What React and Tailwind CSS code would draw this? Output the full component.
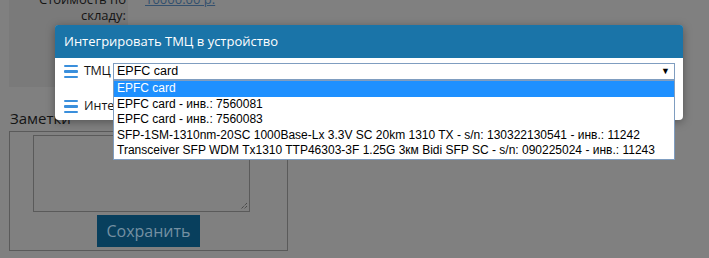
import React from 'react';

const options = [
  'EPFC card',
  'EPFC card - инв.: 7560081',
  'EPFC card - инв.: 7560083',
  'SFP-1SM-1310nm-20SC 1000Base-Lx 3.3V SC 20km 1310 TX - s/n: 130322130541 - инв.: 11242',
  'Transceiver SFP WDM Tx1310 TTP46303-3F 1.25G 3км Bidi SFP SC - s/n: 090225024 - инв.: 11243',
];

function Burger() {
  return (
    <div className="flex flex-col gap-[3px] w-[14px] shrink-0">
      <span className="block h-[2.5px] bg-[#3a8fdc] rounded-[1px]" />
      <span className="block h-[2.5px] bg-[#3a8fdc] rounded-[1px]" />
      <span className="block h-[2.5px] bg-[#3a8fdc] rounded-[1px]" />
    </div>
  );
}

export default function App() {
  return (
    <div
      className="relative w-[709px] h-[258px] overflow-hidden bg-[#808080] text-[#141414]"
      style={{ fontFamily: '"Open Sans", "Noto Sans", sans-serif' }}
    >
      {/* page behind the overlay */}
      <div className="flex items-start">
        <div className="ml-[9px] w-[119px] h-[96px] bg-[#7a7a7a] text-right text-[13px] leading-[16px] pr-[2px] -mt-[9px]">
          <div>Стоимость по</div>
          <div>складу:</div>
          <div className="mt-[29px]">Свободно:</div>
          <div className="mt-[7px]">Дата:</div>
        </div>
        <div className="ml-[17px] -mt-[9px] text-[13px] leading-[16px] text-[#33506e] underline">10000.00 р.</div>
      </div>

      <div className="ml-[10px] mt-[22px] text-[15px] leading-[18px]">Заметки</div>
      <div className="ml-[9px] mt-[4px] w-[279px] h-[120px] border border-[#5a5a5a] flex flex-col items-center">
        <div className="relative mt-[3px] -ml-[14px] w-[217px] h-[77px] border border-[#5a5a5a]">
          <svg className="absolute right-[1px] bottom-[1px]" width="9" height="9" viewBox="0 0 9 9">
            <path d="M8 2 L2 8 M8 5 L5 8" stroke="#333" strokeWidth="1" strokeDasharray="1 1" />
          </svg>
        </div>
        <button className="mt-[3px] w-[103px] h-[32px] bg-[#083f5d] text-[#7490a2] text-[16px]">Сохранить</button>
      </div>

      {/* modal */}
      <div className="absolute left-[55px] top-[25px] w-[628px] bg-white rounded-[4px] shadow-[0_2px_10px_rgba(0,0,0,0.35)]">
        <div className="h-[33px] bg-[#1a74a8] rounded-t-[3px] flex items-center pl-[9px] text-white text-[13px]">
          Интегрировать ТМЦ в устройство
        </div>
        <div className="pl-[9px] pt-[5px] pb-[5px] text-[12.5px]">
          <div className="flex items-center h-[17px]">
            <Burger />
            <span className="ml-[6px] w-[26px] tracking-[-0.3px]">ТМЦ</span>
            <div
              className="relative ml-[3px] w-[562px] h-[17px] border border-[#7f9dc0] flex items-center pl-[3px] text-[12.5px] text-black"
              style={{ fontFamily: '"Liberation Sans", Arial, sans-serif' }}
            >
              EPFC card
              <span className="absolute right-[4px] top-[1px] text-[9px]">▼</span>
              <div className="absolute left-[-1px] top-[16px] w-[562px] bg-white border border-[#7f9dc0] z-10 text-[12px]">
                {options.map((o, i) => (
                  <div
                    key={i}
                    className={`h-[15.5px] leading-[15.5px] pl-[3px] whitespace-nowrap ${i === 0 ? 'bg-[#1e90ff] text-white' : ''}`}
                  >
                    {o}
                  </div>
                ))}
              </div>
            </div>
          </div>
          <div className="flex items-center h-[17px] mt-[18px]">
            <Burger />
            <span className="ml-[6px]">Интегрировать</span>
          </div>
        </div>
      </div>
    </div>
  );
}
